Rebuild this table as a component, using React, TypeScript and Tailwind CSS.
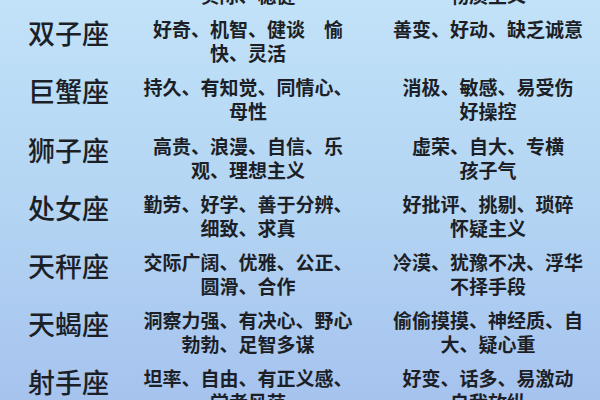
const rows: { name: string; good: string[]; bad: string[] }[] = [
  { name: "金牛座", good: ["稳定、务实、有耐心、", "实际、稳健"], bad: ["固执、占有欲强", "物质主义"] },
  { name: "双子座", good: ["好奇、机智、健谈　愉", "快、灵活"], bad: ["善变、好动、缺乏诚意"] },
  { name: "巨蟹座", good: ["持久、有知觉、同情心、", "母性"], bad: ["消极、敏感、易受伤", "好操控"] },
  { name: "狮子座", good: ["高贵、浪漫、自信、乐", "观、理想主义"], bad: ["虚荣、自大、专横", "孩子气"] },
  { name: "处女座", good: ["勤劳、好学、善于分辨、", "细致、求真"], bad: ["好批评、挑剔、琐碎", "怀疑主义"] },
  { name: "天秤座", good: ["交际广阔、优雅、公正、", "圆滑、合作"], bad: ["冷漠、犹豫不决、浮华", "不择手段"] },
  { name: "天蝎座", good: ["洞察力强、有决心、野心", "勃勃、足智多谋"], bad: ["偷偷摸摸、神经质、自", "大、疑心重"] },
  { name: "射手座", good: ["坦率、自由、有正义感、", "学者风范"], bad: ["好变、话多、易激动", "自我放纵"] },
];

function Lines({ lines }: { lines: string[] }) {
  return (
    <div className="flex flex-col items-center pt-[13px] text-[19px] leading-[24px] font-semibold">
      {lines.map((l) => (
        <span key={l} className="whitespace-nowrap">
          {l}
        </span>
      ))}
    </div>
  );
}

export default function App() {
  return (
    <div
      className="w-[600px] h-[400px] overflow-hidden bg-gradient-to-b from-[#c1e2f8] via-[#b4d5f3] to-[#a6c3ee] text-[#1d1f27]"
      style={{ fontFamily: '"Noto Sans CJK SC", "Noto Sans", sans-serif' }}
    >
      <div className="-mt-[54px] flex flex-col">
        {rows.map((r) => (
          <div key={r.name} className="grid grid-cols-[116px_216px_216px] gap-x-[24px] h-[58.2px] shrink-0">
            <div className="pl-[28px] pt-[13px] text-[27px] leading-[32px] font-medium whitespace-nowrap">{r.name}</div>
            <Lines lines={r.good} />
            <Lines lines={r.bad} />
          </div>
        ))}
      </div>
    </div>
  );
}
